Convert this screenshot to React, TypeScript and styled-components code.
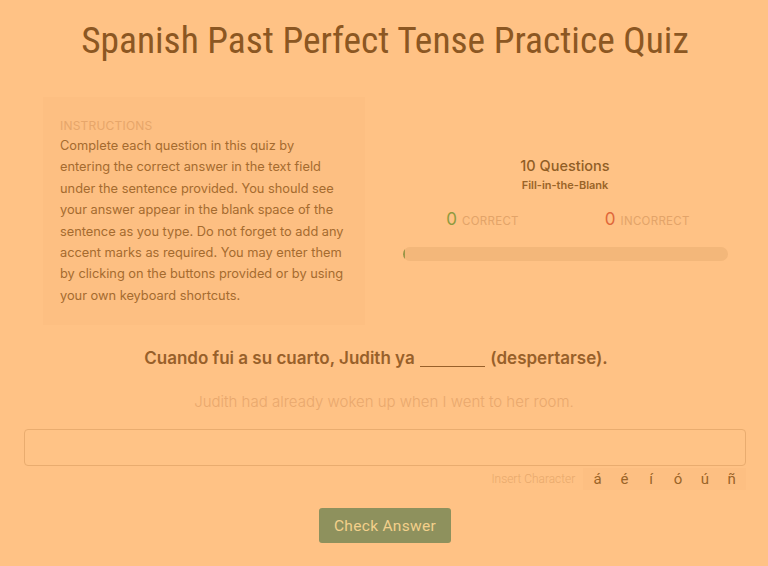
import React from "react";
import styled, { createGlobalStyle } from "styled-components";

const Global = createGlobalStyle`
  html, body { margin: 0; padding: 0; background: #ffc285; }
  body { font-family: Inter, "Noto Sans", sans-serif; }
  * { box-sizing: border-box; }
`;

const Page = styled.div`
  width: 768px;
  height: 566px;
  background: #ffc285;
  padding: 0 22px 0 24px;
  overflow: hidden;
`;

const Title = styled.h1`
  margin: 0;
  padding-top: 18px;
  height: 84px;
  text-align: center;
  font-family: "Liberation Sans Narrow", "Roboto Condensed", Roboto, sans-serif;
  font-weight: 400;
  font-size: 37.4px;
  color: #8c5722;
`;

const Top = styled.div`
  display: flex;
  align-items: stretch;
  gap: 19px;
  margin-top: 13px;
  padding-left: 19px;
`;

const Instructions = styled.div`
  width: 322px;
  height: 228px;
  background: #fdbf82;
  padding: 21px 0 0 17px;
`;

const Label = styled.div`
  font-size: 12px;
  color: #e7a66a;
  letter-spacing: 0.2px;
  line-height: 15px;
  margin-bottom: 2px;
`;

const InstrText = styled.p`
  margin: 0;
  font-size: 12.8px;
  line-height: 21.4px;
  color: #a56b2f;
  white-space: nowrap;
`;

const Stats = styled.div`
  flex: 1;
  display: flex;
  flex-direction: column;
  align-items: center;
  padding-top: 60px;
`;

const Count = styled.div`
  font-size: 14.5px;
  font-weight: 500;
  color: #915e25;
  line-height: 18px;
`;

const Kind = styled.div`
  font-size: 11px;
  font-weight: 600;
  color: #9a6428;
  line-height: 16px;
  margin-top: 2px;
`;

const Scores = styled.div`
  display: flex;
  justify-content: center;
  gap: 86px;
  margin-top: 16px;
  padding-left: 6px;
`;

const Score = styled.div`
  display: flex;
  align-items: baseline;
  gap: 5px;
`;

const Num = styled.span<{ $tone: string }>`
  font-size: 17px;
  color: ${(p) => p.$tone};
`;

const ScoreLabel = styled.span`
  font-size: 11.5px;
  letter-spacing: 0.3px;
  color: #e3a469;
`;

const Bar = styled.div`
  width: 325px;
  height: 14px;
  margin-top: 18px;
  border-radius: 7px;
  background: #f3b77a;
  overflow: hidden;
`;

const Fill = styled.div`
  height: 100%;
  background: #9a9648;
`;

const Question = styled.div`
  margin-top: 22px;
  text-align: center;
  font-size: 17px;
  font-weight: 600;
  color: #98602a;
  line-height: 22px;
  padding-right: 18px;
`;

const Blank = styled.span`
  display: inline-block;
  width: 65px;
  border-bottom: 1.5px solid #98602a;
  margin: 0 1px;
  height: 14px;
  vertical-align: -3px;
`;

const Translation = styled.div`
  margin-top: 22px;
  text-align: center;
  font-size: 15px;
  font-weight: 300;
  color: #e9a86d;
  line-height: 22px;
  padding-right: 2px;
`;

const Input = styled.input`
  display: block;
  width: 722px;
  height: 37px;
  margin-top: 16px;
  border: 1px solid #e9ac6f;
  border-radius: 4px;
  background: #ffc386;
  outline: none;
`;

const CharRow = styled.div`
  display: flex;
  justify-content: flex-end;
  align-items: center;
  gap: 8px;
  margin-top: 2px;
`;

const CharLabel = styled.span`
  font-family: Roboto, sans-serif;
  font-size: 11.9px;
  font-weight: 300;
  color: #e8a96c;
`;

const Chars = styled.div`
  display: flex;
  background: #fdbf82;
  padding: 0 1px;
  height: 22px;
  align-items: center;
`;

const Char = styled.button`
  border: none;
  background: transparent;
  width: 26.8px;
  padding: 0;
  font-family: Roboto, sans-serif;
  font-size: 15px;
  color: #9a6428;
  text-align: center;
`;

const Actions = styled.div`
  display: flex;
  justify-content: center;
  margin-top: 18px;
`;

const CheckButton = styled.button`
  width: 132px;
  height: 35px;
  border: none;
  border-radius: 3px;
  background: #8e915d;
  color: #f3d08b;
  font-family: Roboto, sans-serif;
  font-size: 15.5px;
  letter-spacing: 0.3px;
`;

const instructionLines = [
  "Complete each question in this quiz by",
  "entering the correct answer in the text field",
  "under the sentence provided. You should see",
  "your answer appear in the blank space of the",
  "sentence as you type. Do not forget to add any",
  "accent marks as required. You may enter them",
  "by clicking on the buttons provided or by using",
  "your own keyboard shortcuts.",
];

export default function App() {
  const chars = ["á", "é", "í", "ó", "ú", "ñ"];
  return (
    <Page>
      <Global />
      <Title>Spanish Past Perfect Tense Practice Quiz</Title>
      <Top>
        <Instructions>
          <Label>INSTRUCTIONS</Label>
          <InstrText>
            {instructionLines.map((line, i) => (
              <React.Fragment key={i}>
                {line}
                {i < instructionLines.length - 1 && <br />}
              </React.Fragment>
            ))}
          </InstrText>
        </Instructions>
        <Stats>
          <Count>10 Questions</Count>
          <Kind>Fill-in-the-Blank</Kind>
          <Scores>
            <Score>
              <Num $tone="#8f9a3e">0</Num>
              <ScoreLabel>CORRECT</ScoreLabel>
            </Score>
            <Score>
              <Num $tone="#e0683a">0</Num>
              <ScoreLabel>INCORRECT</ScoreLabel>
            </Score>
          </Scores>
          <Bar>
            <Fill style={{ width: "2px" }} />
          </Bar>
        </Stats>
      </Top>
      <Question>
        Cuando fui a su cuarto, Judith ya <Blank /> (despertarse).
      </Question>
      <Translation>Judith had already woken up when I went to her room.</Translation>
      <Input type="text" />
      <CharRow>
        <CharLabel>Insert Character</CharLabel>
        <Chars>
          {chars.map((c) => (
            <Char key={c}>{c}</Char>
          ))}
        </Chars>
      </CharRow>
      <Actions>
        <CheckButton>Check Answer</CheckButton>
      </Actions>
    </Page>
  );
}
